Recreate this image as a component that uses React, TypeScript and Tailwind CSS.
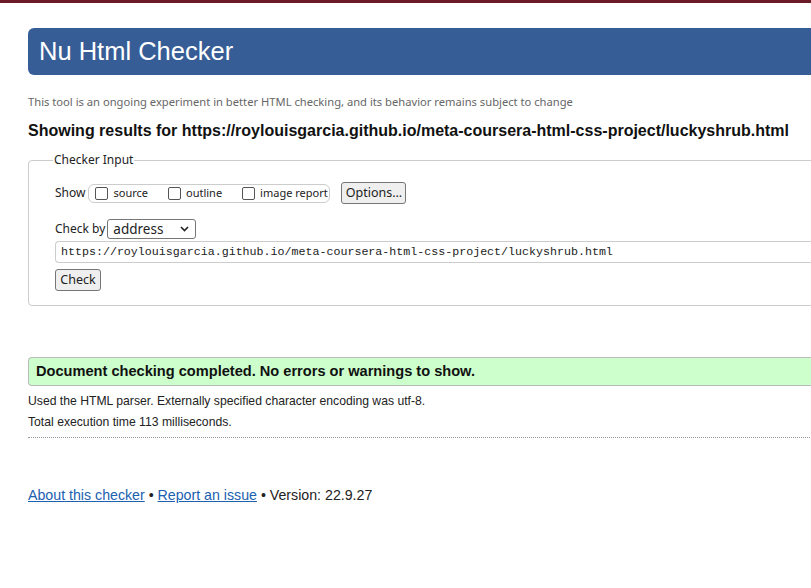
export default function App() {
  const ui = { fontFamily: '"Noto Sans", "Open Sans", sans-serif' };
  const arial = { fontFamily: '"Liberation Sans", Arial, sans-serif' };

  return (
    <div className="h-[588px] w-[811px] overflow-hidden bg-white text-[#222]" style={arial}>
      <div className="h-[3px] bg-[#6b1b26]" />
      <main className="w-[840px] pl-[28px]">
        <header className="mt-[25px] flex h-[47px] items-center rounded-l-md bg-[#375d96] pl-[11px]">
          <h1 className="text-[25.5px] leading-none text-white">Nu Html Checker</h1>
        </header>

        <p className="mt-[19px] h-4 text-[11.2px] leading-4 text-[#666]" style={ui}>
          This tool is an ongoing experiment in better HTML checking, and its behavior remains subject to change
        </p>
        <h2 className="mt-[11px] h-5 text-[16px] font-bold leading-5 text-[#111]">
          Showing results for https://roylouisgarcia.github.io/meta-coursera-html-css-project/luckyshrub.html
        </h2>

        <fieldset
          className="mt-[10px] h-[155px] rounded-[4px] border border-[#ccc] pl-[26px]"
          style={ui}
        >
          <legend className="-ml-[2px] px-[1px] text-[12px] text-[#222]">Checker Input</legend>

          <div className="mt-[13px] flex items-center text-[12px]">
            <span className="mr-[3px]">Show</span>
            <div className="flex h-[19px] w-[242px] items-center rounded-[6px] border border-[#ccc] pl-[6px] text-[11px]">
              <label className="flex items-center">
                <span className="mr-[5px] h-[13px] w-[13px] rounded-[2px] border border-[#555] bg-white" />
                source
              </label>
              <label className="ml-[20px] flex items-center">
                <span className="mr-[5px] h-[13px] w-[13px] rounded-[2px] border border-[#555] bg-white" />
                outline
              </label>
              <label className="ml-[20px] flex items-center">
                <span className="mr-[5px] h-[13px] w-[13px] rounded-[2px] border border-[#555] bg-white" />
                image report
              </label>
            </div>
            <button
              type="button"
              className="ml-[11px] h-[22px] w-[65px] rounded-[3px] border border-[#767676] bg-[#efefef] text-[12.5px]"
            >
              Options...
            </button>
          </div>

          <div className="mt-[15px] flex items-center text-[12px]">
            <span className="mr-[2px]">Check by</span>
            <div className="flex h-[20px] w-[89px] items-center justify-between rounded-[3px] border border-[#767676] bg-white pl-[5px] pr-[6px] text-[13.5px]">
              <span>address</span>
              <svg width="9" height="6" viewBox="0 0 9 6" fill="none">
                <path d="M1 1l3.5 3.5L8 1" stroke="#222" strokeWidth="1.6" />
              </svg>
            </div>
          </div>

          <div
            className="mt-[2px] flex h-[22px] items-center rounded-l-[4px] border border-r-0 border-[#ccc] pl-[5px] text-[11.65px]"
            style={{ fontFamily: '"Liberation Mono", "DejaVu Sans Mono", monospace' }}
          >
            https://roylouisgarcia.github.io/meta-coursera-html-css-project/luckyshrub.html
          </div>

          <button
            type="button"
            className="mt-[6px] h-[22px] w-[46px] rounded-[3px] border border-[#767676] bg-[#efefef] text-[12.5px]"
          >
            Check
          </button>
        </fieldset>

        <div className="mt-[51px] flex h-[29px] items-center rounded-l-[4px] border border-r-0 border-[#bbb] bg-[#ccffcc] pl-[7px]">
          <p className="text-[14.6px] font-bold text-[#111]">Document checking completed. No errors or warnings to show.</p>
        </div>

        <p className="mt-[5px] text-[12.2px] leading-[21px]">
          Used the HTML parser. Externally specified character encoding was utf-8.
        </p>
        <p className="text-[12.2px] leading-[21px]">Total execution time 113 milliseconds.</p>
        <div className="mt-[4px] border-t border-dotted border-[#999]" />

        <footer className="mt-[47px] text-[14.2px] leading-5">
          <a href="#" className="text-[#2060b0] underline">
            About this checker
          </a>
          {" • "}
          <a href="#" className="text-[#2060b0] underline">
            Report an issue
          </a>
          {" • Version: 22.9.27"}
        </footer>
      </main>
    </div>
  );
}
